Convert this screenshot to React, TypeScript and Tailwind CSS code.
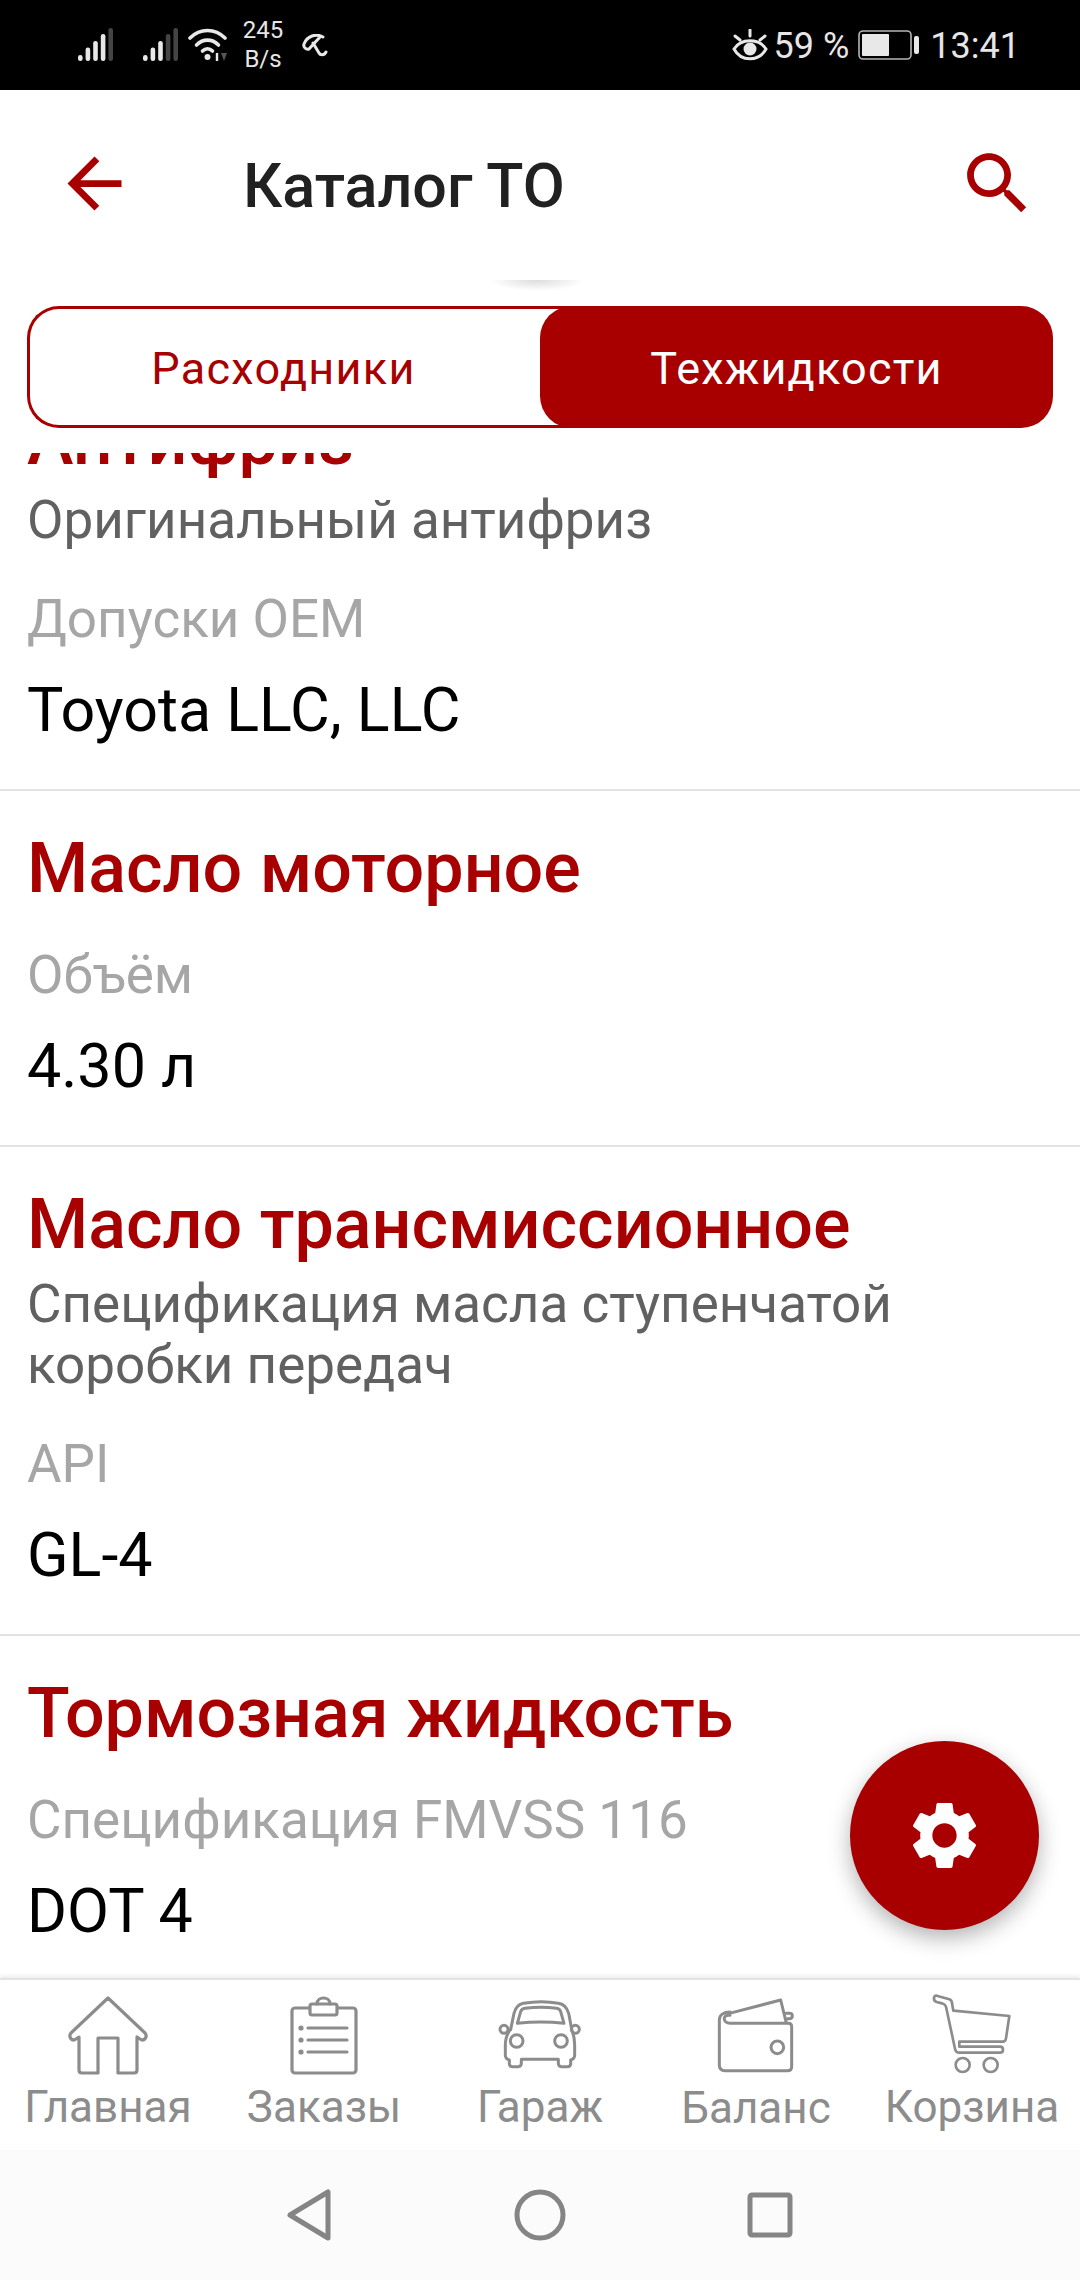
import type { ReactNode } from "react"

const red = "#a80000"

function Signal({ dim }: { dim: number }) {
  const tops = [27, 19.5, 13, 6, 0]
  return (
    <svg width="36" height="34" viewBox="0 0 36 34">
      {tops.map((t, i) => (
        <rect
          key={i}
          x={i * 7.6}
          y={t}
          width="4.6"
          height={33 - t}
          rx="2.2"
          fill={i >= 5 - dim ? "#444" : "#e8e8e8"}
        />
      ))}
    </svg>
  )
}

function StatusBar() {
  return (
    <div className="flex h-[90px] shrink-0 items-center justify-between bg-black pl-[78px] pr-[60px] text-[#e6e6e6]">
      <div className="flex items-center">
        <div className="mt-[-1px]"><Signal dim={1} /></div>
        <div className="ml-[29px] mt-[-1px]"><Signal dim={2} /></div>
        <svg className="ml-[9px] mt-[-1px]" width="40" height="34" viewBox="0 0 40 34" fill="none" stroke="#e8e8e8" strokeWidth="3.6" strokeLinecap="round">
          <path d="M2 10C12 0 27 0 37 10" />
          <path d="M8.5 17C15 10.5 24 10.5 30.5 17" />
          <path d="M14.5 23C17.5 20 21.5 20 24.5 23" />
          <circle cx="19.5" cy="29" r="3" fill="#e8e8e8" stroke="none" />
          <path d="M29 25v8" strokeWidth="2.4" strokeLinecap="butt" />
          <path d="M33 25h6l-3 8z" fill="#555" stroke="none" />
        </svg>
        <div className="ml-[15px] flex w-[40px] flex-col items-center font-['Roboto',sans-serif] text-[24px] leading-[29px]">
          <span>245</span>
          <span>B/s</span>
        </div>
        <svg className="ml-[19px] mt-[2px]" width="26" height="24" viewBox="0 0 26 24" fill="none" stroke="#e8e8e8" strokeWidth="3" strokeLinecap="round" strokeLinejoin="round">
          <path d="M21 3C14-1 5 2 2 10c-1 3 2 6 5 5L18 3" />
          <path d="M11 9l6 10c1 2 5 3 7-1" />
        </svg>
      </div>
      <div className="mt-[2px] flex items-center font-['Roboto',sans-serif] text-[36px] leading-none">
        <svg className="mt-[-2px]" width="36" height="32" viewBox="0 0 36 32" fill="none" stroke="#e8e8e8" strokeWidth="3" strokeLinecap="round">
          <path d="M2 20C9 9 27 9 34 20C27 33 9 33 2 20Z" />
          <circle cx="18" cy="20" r="6.500" fill="#e8e8e8" stroke="none" />
          <path d="M18 1v6M3 7l5 4M33 7l-5 4" />
        </svg>
        <span className="ml-[6px]">59 %</span>
        <svg className="ml-[9px] mt-[-2px]" width="62" height="30" viewBox="0 0 62 30">
          <rect x="1" y="1" width="52" height="28" rx="4" fill="none" stroke="#b5b5b5" strokeWidth="1.6" />
          <rect x="4" y="4" width="27" height="22" rx="1" fill="#e8e8e8" />
          <rect x="56" y="6" width="5" height="18" rx="2" fill="#e8e8e8" />
        </svg>
        <span className="ml-[10px]">13:41</span>
      </div>
    </div>
  )
}

function Header() {
  return (
    <div className="relative z-20 flex h-[190px] shrink-0 items-center bg-white font-['Roboto',sans-serif]">
      <svg className="ml-[54px] mt-[-4px] shrink-0" width="81" height="81" viewBox="0 0 24 24" fill={red}>
        <path d="M20 11H7.83l5.59-5.59L12 4l-8 8 8 8 1.41-1.41L7.83 13H20v-2z" />
      </svg>
      <span className="ml-[108px] mt-[2px] text-[61px] font-medium leading-none text-[#212121]">Каталог ТО</span>
      <svg className="ml-auto mr-[42px] mt-[-4px] shrink-0" width="81" height="81" viewBox="0 0 24 24" fill={red}>
        <path d="M15.5 14h-.79l-.28-.27C15.41 12.59 16 11.11 16 9.5 16 5.91 13.09 3 9.5 3S3 5.91 3 9.5 5.91 16 9.5 16c1.61 0 3.09-.59 4.23-1.57l.27.28v.79l5 4.99L20.49 19l-4.99-5zm-6 0C7.01 14 5 11.99 5 9.5S7.01 5 9.5 5 14 7.01 14 9.5 11.99 14 9.5 14z" />
      </svg>
      <div className="absolute bottom-[-11px] left-[489px] h-[11px] w-[96px] bg-[radial-gradient(ellipse_at_top,#dcdcdc,transparent_70%)]" />
    </div>
  )
}

function Tabs() {
  return (
    <div className="relative z-10 shrink-0 bg-white px-[27px] pb-[25px] pt-[26px] font-['Roboto',sans-serif] text-[45px] leading-none">
      <div className="flex h-[122px]">
        <div className="-mr-[36px] flex w-[549px] shrink-0 items-center justify-center rounded-l-[32px] border-[3px] border-r-0 border-[#a80000] bg-white pr-[39px] pt-[2px] tracking-[1.3px] text-[#a80000]">
          Расходники
        </div>
        <div className="relative flex w-[513px] shrink-0 items-center justify-center rounded-[32px] bg-[#a80000] pt-[2px] tracking-[1.2px] text-white">
          Техжидкости
        </div>
      </div>
    </div>
  )
}

function Item({ title, sub, label, value }: { title: string; sub?: ReactNode; label: string; value: string }) {
  return (
    <div className="border-b-[2px] border-[#e2e2e2] px-[27px] pb-[43px] pt-[36px]">
      <div className="text-[70px] font-medium leading-[82px] text-[#a80000]">{title}</div>
      {sub && <div className="mt-[9px] text-[53px] leading-[61px] text-[#616161]">{sub}</div>}
      <div className={`${sub ? "mt-[38px]" : "mt-[36px]"} text-[53px] leading-[61px] text-[#a6a6a6]`}>{label}</div>
      <div className="mt-[24px] text-[61px] leading-[72px] text-black">{value}</div>
    </div>
  )
}

function List() {
  return (
    <div className="min-h-0 flex-1 overflow-hidden bg-white font-['Roboto',sans-serif]">
      <div className="mt-[-90px]">
        <Item title="Антифриз" sub="Оригинальный антифриз" label="Допуски OEM" value="Toyota LLC, LLC" />
        <Item title="Масло моторное" label="Объём" value="4.30 л" />
        <Item title="Масло трансмиссионное" sub={<>Спецификация масла ступенчатой<br />коробки передач</>} label="API" value="GL-4" />
        <Item title="Тормозная жидкость" label="Спецификация FMVSS 116" value="DOT 4" />
      </div>
    </div>
  )
}

const stroke = { fill: "none", stroke: "#8c8c8c", strokeWidth: 3.2, strokeLinecap: "round", strokeLinejoin: "round" } as const
// car, wallet and cart are drawn on a 300x270 grid shown at 100x90
const thin = { ...stroke, strokeWidth: 9 } as const

const tabIcons: Record<string, ReactNode> = {
  home: (
    <svg width="84" height="80" viewBox="0 0 84 80" {...stroke}>
      <path d="M42 3L79 38c3 4-1 9-5 6l-3-2v33c0 2-1 3-3 3H52V43H32v35H16c-2 0-3-1-3-3V42l-3 2c-4 3-8-2-5-6z" />
    </svg>
  ),
  orders: (
    <svg width="68" height="80" viewBox="0 0 68 80" {...stroke}>
      <rect x="2" y="13" width="64" height="65" rx="3" />
      <rect x="20" y="9" width="27" height="11" rx="2" fill="#fff" />
      <path d="M27 9c0-8 13-8 13 0" />
      <path d="M18 33h39M18 45h39M18 57h39" />
      <circle cx="11" cy="33" r="2.600" fill="#8c8c8c" stroke="none" />
      <circle cx="11" cy="45" r="2.600" fill="#8c8c8c" stroke="none" />
      <circle cx="11" cy="57" r="2.600" fill="#8c8c8c" stroke="none" />
    </svg>
  ),
  car: (
    <svg className="shrink-0" width="100" height="90" viewBox="0 0 300 270" {...thin}>
      <path d="M62 118L72 70C78 48 88 42 100 40C140 33 170 33 205 40C220 42 230 50 236 70L245 118" />
      <path d="M82 100L92 65C94 58 98 56 105 55C140 50 165 50 200 55C207 56 210 58 212 65L222 100C180 95 125 95 82 100Z" />
      <path d="M62 118C48 135 46 150 46 165V195C46 205 50 208 58 210V222C58 228 62 230 68 230H85C92 230 94 226 94 220V208H205V220C205 226 208 230 214 230H232C238 230 242 228 242 222V210C250 208 254 205 254 195V165C254 150 252 135 245 118" />
      <circle cx="42" cy="118" r="12" />
      <circle cx="256" cy="118" r="12" />
      <circle cx="80" cy="153" r="19" />
      <circle cx="213" cy="153" r="19" />
    </svg>
  ),
  wallet: (
    <svg className="ml-[8px] shrink-0" width="100" height="90" viewBox="0 0 300 270" {...thin}>
      <path d="M60 66C40 66 28 75 28 90V225C28 236 35 242 45 242H232C240 242 245 238 245 230V110C245 102 242 100 235 100H60C38 100 36 72 60 76" />
      <path d="M58 70L212 30L228 95" />
      <path d="M228 70H238C250 70 250 86 238 86H232" />
      <circle cx="202" cy="172" r="19" />
    </svg>
  ),
  cart: (
    <svg className="-ml-[4px] shrink-0" width="100" height="90" viewBox="0 0 300 270" {...thin} strokeWidth={8}>
      <path d="M50 17L88 28C94 30 96 34 96 40L100 62L268 78L258 145C257 152 254 155 248 155H118V170H240C252 170 252 188 240 188H118C110 188 106 182 105 176L78 50C76 44 72 42 66 40L50 36C38 32 40 15 50 17Z" />
      <circle cx="128" cy="225" r="21" />
      <circle cx="212" cy="225" r="21" />
    </svg>
  ),
}

function TabItem({ icon, label, raise }: { icon: string; label: string; raise?: boolean }) {
  return (
    <div className="flex w-[216px] flex-col items-center">
      <div className="flex h-[82px] items-center justify-center">{tabIcons[icon]}</div>
      <span className={`${raise ? "mt-[8px]" : "mt-[7px]"} whitespace-nowrap text-[44px] leading-[48px] text-[#8c8c8c]`}>{label}</span>
    </div>
  )
}

function BottomTabs() {
  return (
    <div className="relative flex h-[172px] shrink-0 border-t-[2px] border-[#e4e4e4] bg-white pt-[14px] font-['Roboto',sans-serif] shadow-[0_-2px_4px_rgba(0,0,0,0.08)]">
      <TabItem icon="home" label="Главная" />
      <TabItem icon="orders" label="Заказы" />
      <TabItem icon="car" label="Гараж" />
      <TabItem icon="wallet" label="Баланс" raise />
      <TabItem icon="cart" label="Корзина" />
    </div>
  )
}

function NavBar() {
  return (
    <div className="flex h-[130px] shrink-0 items-center justify-center bg-[#fbfbfb]">
      <svg width="46" height="54" viewBox="0 0 46 54" className="ml-[-1px]" fill="none" stroke="#858585" strokeWidth="5" strokeLinejoin="round">
        <path d="M42 4v46L4 27z" />
      </svg>
      <svg width="52" height="52" viewBox="0 0 52 52" className="ml-[182px]" fill="none" stroke="#858585" strokeWidth="5">
        <circle cx="26" cy="26" r="23" />
      </svg>
      <svg width="46" height="46" viewBox="0 0 46 46" className="ml-[181px]" fill="none" stroke="#858585" strokeWidth="5" strokeLinejoin="round">
        <rect x="3" y="3" width="40" height="40" rx="2" />
      </svg>
    </div>
  )
}

export default function App() {
  return (
    <div className="relative flex h-[2280px] w-[1080px] flex-col overflow-hidden bg-white">
      <StatusBar />
      <Header />
      <Tabs />
      <List />
      <BottomTabs />
      <NavBar />
      <button className="absolute left-[850px] top-[1741px] flex h-[189px] w-[189px] items-center justify-center rounded-full bg-[#a80000] shadow-[0_8px_22px_rgba(0,0,0,0.3)]">
        <svg width="81" height="81" viewBox="0 0 24 24" fill="#fff">
          <path d="M19.14 12.94c.04-.3.06-.61.06-.94 0-.32-.02-.64-.07-.94l2.03-1.58c.18-.14.23-.41.12-.61l-1.92-3.32c-.12-.22-.37-.29-.59-.22l-2.39.96c-.5-.38-1.03-.7-1.62-.94l-.36-2.54c-.04-.24-.24-.41-.48-.41h-3.84c-.24 0-.43.17-.47.41l-.36 2.54c-.59.24-1.13.57-1.62.94l-2.39-.96c-.22-.08-.47 0-.59.22L2.74 8.87c-.12.21-.08.47.12.61l2.03 1.58c-.05.3-.09.63-.09.94s.02.64.07.94l-2.03 1.58c-.18.14-.23.41-.12.61l1.92 3.32c.12.22.37.29.59.22l2.39-.96c.5.38 1.03.7 1.62.94l.36 2.54c.05.24.24.41.48.41h3.84c.24 0 .44-.17.47-.41l.36-2.54c.59-.24 1.13-.56 1.62-.94l2.39.96c.22.08.47 0 .59-.22l1.92-3.32c.12-.22.07-.47-.12-.61l-2.01-1.58zM12 15.6c-1.98 0-3.6-1.62-3.6-3.6s1.62-3.6 3.6-3.6 3.6 1.62 3.6 3.6-1.62 3.6-3.6 3.6z" />
        </svg>
      </button>
    </div>
  )
}
